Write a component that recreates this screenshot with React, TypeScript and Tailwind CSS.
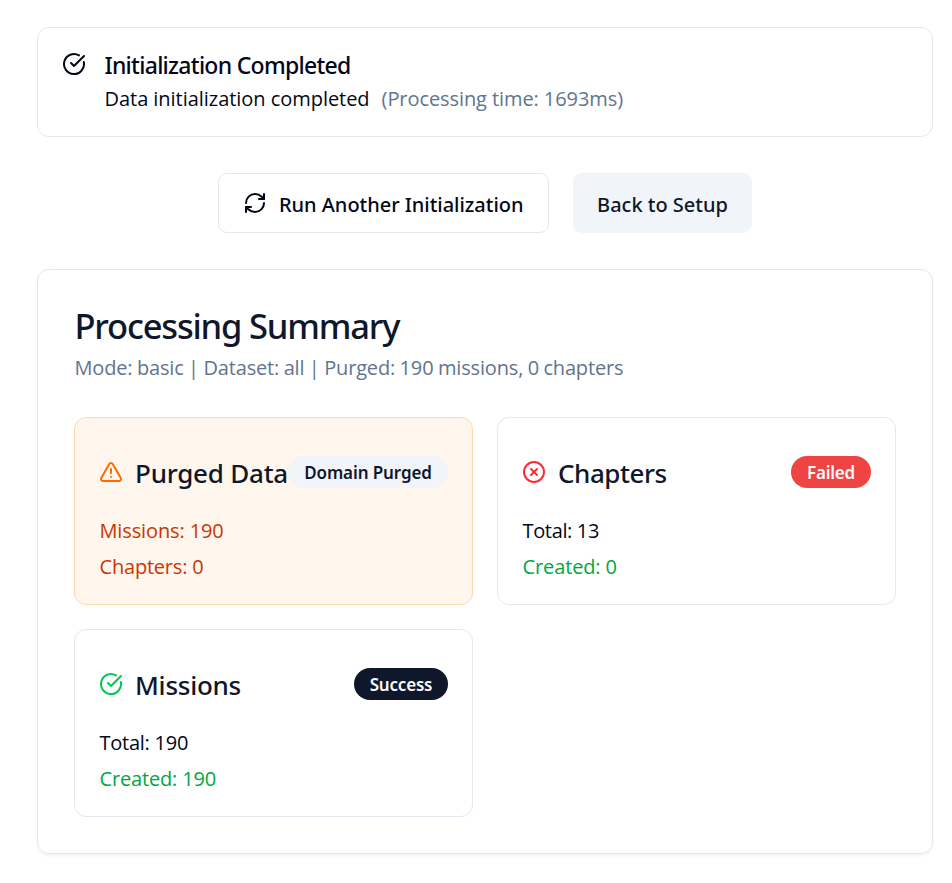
import type { ReactNode } from 'react';
import { CircleCheckBig, CircleX, RefreshCw, TriangleAlert } from 'lucide-react';

const medium = "font-['Noto_Sans',sans-serif] font-medium whitespace-nowrap";

function StatCard({
  icon,
  title,
  titleClass,
  badge,
  badgeClass,
  className = 'border-[#e2e8f0] bg-white',
  children,
}: {
  icon: ReactNode;
  title: string;
  titleClass: string;
  badge: string;
  badgeClass: string;
  className?: string;
  children: ReactNode;
}) {
  return (
    <div className={`rounded-xl border px-6 pt-9 pb-6 ${className}`}>
      <div className="flex h-9 items-center justify-between">
        <div className="flex items-center gap-3">
          {icon}
          <h3 className={`${medium} h-9 text-[26px] leading-[38px] text-slate-900 ${titleClass}`}>{title}</h3>
        </div>
        <span
          className={`flex h-8 shrink-0 items-center justify-center rounded-full pt-[2px] font-['Noto_Sans',sans-serif] text-[17px] leading-6 font-semibold whitespace-nowrap ${badgeClass}`}
        >
          {badge}
        </span>
      </div>
      <div className="mt-6 flex flex-col gap-1.5 pl-[0.5px] text-[20px] leading-[34px]">{children}</div>
    </div>
  );
}

export default function App() {
  return (
    <main className="flex h-[883px] flex-col bg-white pt-[27px] pr-[19px] pl-[37px] font-['Open_Sans',sans-serif] text-[#020817]">
      <section className="flex h-[110px] gap-[18.5px] rounded-xl border border-[#e2e8f0] p-6">
        <CircleCheckBig className="size-6 shrink-0" />
        <div>
          <h5 className={`${medium} h-6 text-[23px] leading-[26px] tracking-[-0.72px]`}>Initialization Completed</h5>
          <div className="mt-1.5 flex h-[30px] text-[20px] leading-[34px] whitespace-nowrap">
            <span className="tracking-[-0.04px]">Data initialization completed</span>
            <span className="ml-[12px] tracking-[-0.08px] text-slate-500">(Processing time: 1693ms)</span>
          </div>
        </div>
      </section>

      <div className="mt-9 flex justify-center gap-6">
        <button
          className={`${medium} flex h-[60px] w-[331px] items-center gap-3 rounded-[9px] border border-[#e2e8f0] bg-white pl-6 text-[20px]`}
        >
          <RefreshCw className="size-6 shrink-0" />
          <span className="pt-[3px] tracking-[-0.03px]">Run Another Initialization</span>
        </button>
        <button
          className={`${medium} flex h-[60px] w-[179px] items-center justify-center rounded-[9px] bg-slate-100 pt-[3px] text-[20px] text-slate-900`}
        >
          Back to Setup
        </button>
      </div>

      <section className="mt-9 h-[585px] rounded-xl border border-[#e2e8f0] bg-white p-9 shadow-[0_1.5px_3px_rgba(0,0,0,0.05)]">
        <h2 className={`${medium} h-9 pl-[0.5px] text-[34.5px] leading-[39px] tracking-[-1.19px] text-slate-900`}>
          Processing Summary
        </h2>
        <p className="mt-[9px] h-[30px] pl-[0.5px] text-[20px] leading-[34px] tracking-[-0.16px] [word-spacing:-0.55px] whitespace-nowrap text-slate-500">
          Mode: basic | Dataset: all | Purged: 190 missions, 0 chapters
        </p>

        <div className="mt-9 grid grid-cols-2 gap-6">
          <StatCard
            icon={<TriangleAlert className="size-6 shrink-0 text-orange-500" />}
            title="Purged Data"
            titleClass="tracking-[-0.23px]"
            badge="Domain Purged"
            badgeClass="w-40 bg-slate-100 text-slate-900 tracking-[-0.1px]"
            className="border-orange-200 bg-orange-50"
          >
            <p className="h-[30px] tracking-[-0.12px] text-orange-700">Missions: 190</p>
            <p className="h-[30px] tracking-[-0.2px] text-orange-700">Chapters: 0</p>
          </StatCard>

          <StatCard
            icon={<CircleX className="size-6 shrink-0 text-red-500" />}
            title="Chapters"
            titleClass="tracking-[-0.45px]"
            badge="Failed"
            badgeClass="w-20 bg-[#ef4444] text-slate-50 tracking-[-0.25px]"
          >
            <p className="h-[30px] tracking-[-0.35px]">Total: 13</p>
            <p className="h-[30px] tracking-[-0.12px] text-green-600">Created: 0</p>
          </StatCard>

          <StatCard
            icon={<CircleCheckBig className="size-6 shrink-0 text-green-500" />}
            title="Missions"
            titleClass="tracking-[-0.25px]"
            badge="Success"
            badgeClass="w-[94px] bg-slate-900 text-slate-50 tracking-[-0.2px]"
          >
            <p className="h-[30px] tracking-[-0.25px]">Total: 190</p>
            <p className="h-[30px] tracking-[-0.16px] text-green-600">Created: 190</p>
          </StatCard>
        </div>
      </section>
    </main>
  );
}
